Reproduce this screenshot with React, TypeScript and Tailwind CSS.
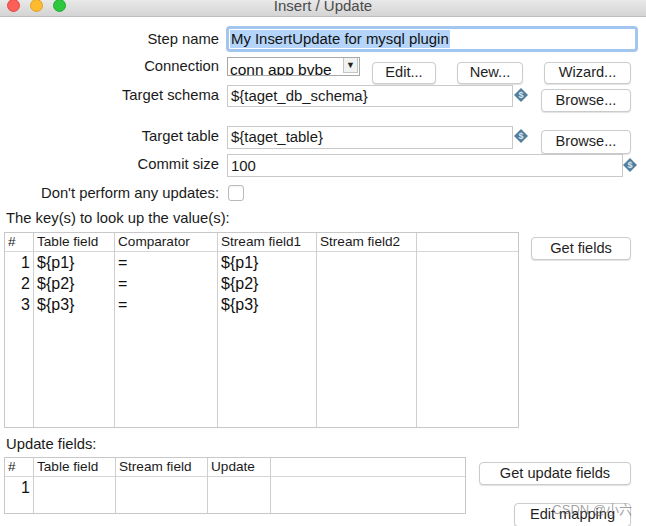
import React from "react";

function Btn({ className, children }: { className: string; children: React.ReactNode }) {
  return (
    <div
      className={`flex items-center justify-center bg-white border border-[#cbcbcb] rounded-[4px] shadow-[0_1px_1px_rgba(0,0,0,0.12)] text-[14.6px] text-[#1f1f1f] ${className}`}
    >
      {children}
    </div>
  );
}

function VarIcon({ className }: { className: string }) {
  return (
    <svg viewBox="0 0 14 14" className={`w-[14px] h-[14px] shrink-0 ${className}`}>
      <polygon points="7,0 14,7 7,14 0,7" fill="#527f9c" />
      <text x="7" y="10.2" textAnchor="middle" fontSize="9" fontWeight="bold" fill="#dbe7ef" fontFamily="Liberation Sans, Arial, sans-serif">
        $
      </text>
    </svg>
  );
}

function Label({ className, children }: { className: string; children: React.ReactNode }) {
  return <div className={`w-[219px] shrink-0 text-right text-[14.8px] text-[#1a1a1a] whitespace-nowrap ${className}`}>{children}</div>;
}

function Input({ className, children }: { className: string; children?: React.ReactNode }) {
  return (
    <div className={`shrink-0 bg-white border border-[#c9c9c9] flex items-center pl-[3px] text-[14.9px] text-[#1a1a1a] ${className}`}>
      {children}
    </div>
  );
}

type Col = { title: string; w: string; cells: string[]; right?: boolean };

function Table({ cols, className }: { cols: Col[]; className: string }) {
  return (
    <div className={`shrink-0 bg-white border border-[#c8c8c8] flex ${className}`}>
      {cols.map((c, i) => (
        <div key={i} className={`flex flex-col h-full ${c.w} ${i < cols.length - 1 ? "border-r border-[#cfcfcf]" : ""}`}>
          <div className="h-[19px] shrink-0 border-b border-[#d6d6d6] pl-[3px] text-[13.6px] leading-[18px] text-[#1a1a1a] whitespace-nowrap overflow-hidden">
            {c.title}
          </div>
          {c.cells.map((t, j) => (
            <div
              key={j}
              className={`h-[21px] shrink-0 text-[16px] leading-[21px] text-[#111] whitespace-nowrap ${c.right ? "text-right pr-[3px]" : "pl-[3px]"}`}
            >
              {t}
            </div>
          ))}
        </div>
      ))}
    </div>
  );
}

export default function App() {
  const keyCols: Col[] = [
    { title: "#", w: "w-[29px]", cells: ["1", "2", "3"], right: true },
    { title: "Table field", w: "w-[81px]", cells: ["${p1}", "${p2}", "${p3}"] },
    { title: "Comparator", w: "w-[103px]", cells: ["=", "=", "="] },
    { title: "Stream field1", w: "w-[99px]", cells: ["${p1}", "${p2}", "${p3}"] },
    { title: "Stream field2", w: "w-[100px]", cells: [] },
    { title: "", w: "flex-1", cells: [] },
  ];
  const updCols: Col[] = [
    { title: "#", w: "w-[29px]", cells: ["1"], right: true },
    { title: "Table field", w: "w-[82px]", cells: [] },
    { title: "Stream field", w: "w-[92px]", cells: [] },
    { title: "Update", w: "w-[63px]", cells: [] },
    { title: "", w: "flex-1", cells: [] },
  ];

  return (
    <div className="w-[646px] h-[526px] overflow-hidden bg-white relative font-['Liberation_Sans',Arial,sans-serif]">
      {/* title bar */}
      <div className="h-[17px] bg-gradient-to-b from-[#e9e9e9] to-[#d4d4d4] border-b border-[#bdbdbd] flex items-start overflow-hidden relative">
        <div className="flex gap-[10px] pl-[7px] -mt-[1px]">
          <div className="w-[13px] h-[13px] rounded-full bg-[#fc5f57] border border-[#e14a43]" />
          <div className="w-[13px] h-[13px] rounded-full bg-[#fdbb2f] border border-[#dfa023]" />
          <div className="w-[13px] h-[13px] rounded-full bg-[#2ec840] border border-[#24a935]" />
        </div>
        <div className="absolute inset-x-0 top-0 flex justify-center">
          <span className="text-[15px] leading-[14px] -mt-[1px] text-[#4b4b4b]">Insert / Update</span>
        </div>
      </div>

      <div className="flex flex-col">
        {/* Step name */}
        <div className="flex items-center mt-[9px] h-[26px]">
          <Label className="leading-[18px]">Step name</Label>
          <div className="ml-[7px] w-[412px] h-[26px] rounded-[4px] border-[3px] border-[#a2c6f0] bg-white flex items-center pl-[1px] text-[14.9px]">
            <span className="bg-[#b4d5f9] px-[1px] leading-[18px] text-[#111]">My InsertUpdate for mysql plugin</span>
          </div>
        </div>

        {/* Connection */}
        <div className="flex items-start mt-[5px] h-[27px]">
          <Label className="leading-[19px]">Connection</Label>
          <div className="ml-[8px] w-[133px] h-[19px] shrink-0 border border-[#a8a8a8] bg-white flex overflow-hidden">
            <div className="flex-1 pl-[2px] text-[15.5px] leading-[23px] text-[#111] whitespace-nowrap">conn app bvbe</div>
            <div className="w-[15px] h-[15px] mr-[1px] border-l border-b border-r border-[#c4c4c4] bg-[#f2f2f2] flex items-center justify-center text-[9px] leading-none text-[#222]">
              ▼
            </div>
          </div>
          <Btn className="ml-[12px] mt-[5px] w-[64px] h-[22px]">Edit...</Btn>
          <Btn className="ml-[21px] mt-[5px] w-[66px] h-[22px]">New...</Btn>
          <Btn className="ml-[21px] mt-[5px] w-[87px] h-[22px]">Wizard...</Btn>
        </div>

        {/* Target schema */}
        <div className="flex items-start mt-[1px] h-[27px]">
          <Label className="leading-[20px]">Target schema</Label>
          <Input className="ml-[8px] w-[286px] h-[22px]">{"${taget_db_schema}"}</Input>
          <VarIcon className="ml-[1px] mt-[3px]" />
          <Btn className="ml-[13px] mt-[4px] w-[90px] h-[23px]">Browse...</Btn>
        </div>

        {/* Target table */}
        <div className="flex items-start mt-[14px] h-[28px]">
          <Label className="leading-[20px]">Target table</Label>
          <Input className="ml-[8px] w-[286px] h-[23px]">{"${taget_table}"}</Input>
          <VarIcon className="ml-[1px] mt-[3px]" />
          <Btn className="ml-[13px] mt-[4px] w-[90px] h-[24px]">Browse...</Btn>
        </div>

        {/* Commit size */}
        <div className="flex items-start h-[23px]">
          <Label className="leading-[21px]">Commit size</Label>
          <Input className="ml-[8px] w-[396px] h-[23px] pt-[2px]">100</Input>
          <VarIcon className="ml-0 mt-[4px]" />
        </div>

        {/* Don't perform */}
        <div className="flex items-center mt-[8px] h-[16px]">
          <Label className="leading-[16px]">Don't perform any updates:</Label>
          <div className="ml-[9px] w-[16px] h-[16px] rounded-[3px] border border-[#b9b9b9] bg-white shadow-[inset_0_1px_1px_rgba(0,0,0,0.05)]" />
        </div>

        <div className="mt-[9px] pl-[6px] text-[14.8px] leading-[16px] text-[#1a1a1a]">The key(s) to look up the value(s):</div>

        <div className="flex items-start mt-[6px]">
          <Table cols={keyCols} className="ml-[4px] w-[515px] h-[196px]" />
          <Btn className="ml-[12px] mt-[5px] w-[100px] h-[23px]">Get fields</Btn>
        </div>

        <div className="mt-[8px] pl-[6px] text-[14.8px] leading-[16px] text-[#1a1a1a]">Update fields:</div>

        <div className="flex items-start mt-[5px]">
          <Table cols={updCols} className="ml-[4px] w-[462px] h-[57px]" />
          <div className="ml-[13px] flex flex-col items-end">
            <Btn className="mt-[5px] w-[152px] h-[23px]">Get update fields</Btn>
            <Btn className="mt-[18px] w-[117px] h-[24px]">Edit mapping</Btn>
          </div>
        </div>
      </div>

      <div className="absolute right-[14px] top-[503px] text-[13px] leading-[14px] text-[rgba(100,100,100,0.6)] font-['Liberation_Sans','Noto_Sans_CJK_SC',sans-serif] pointer-events-none">
        CSDN @小六
      </div>
    </div>
  );
}
